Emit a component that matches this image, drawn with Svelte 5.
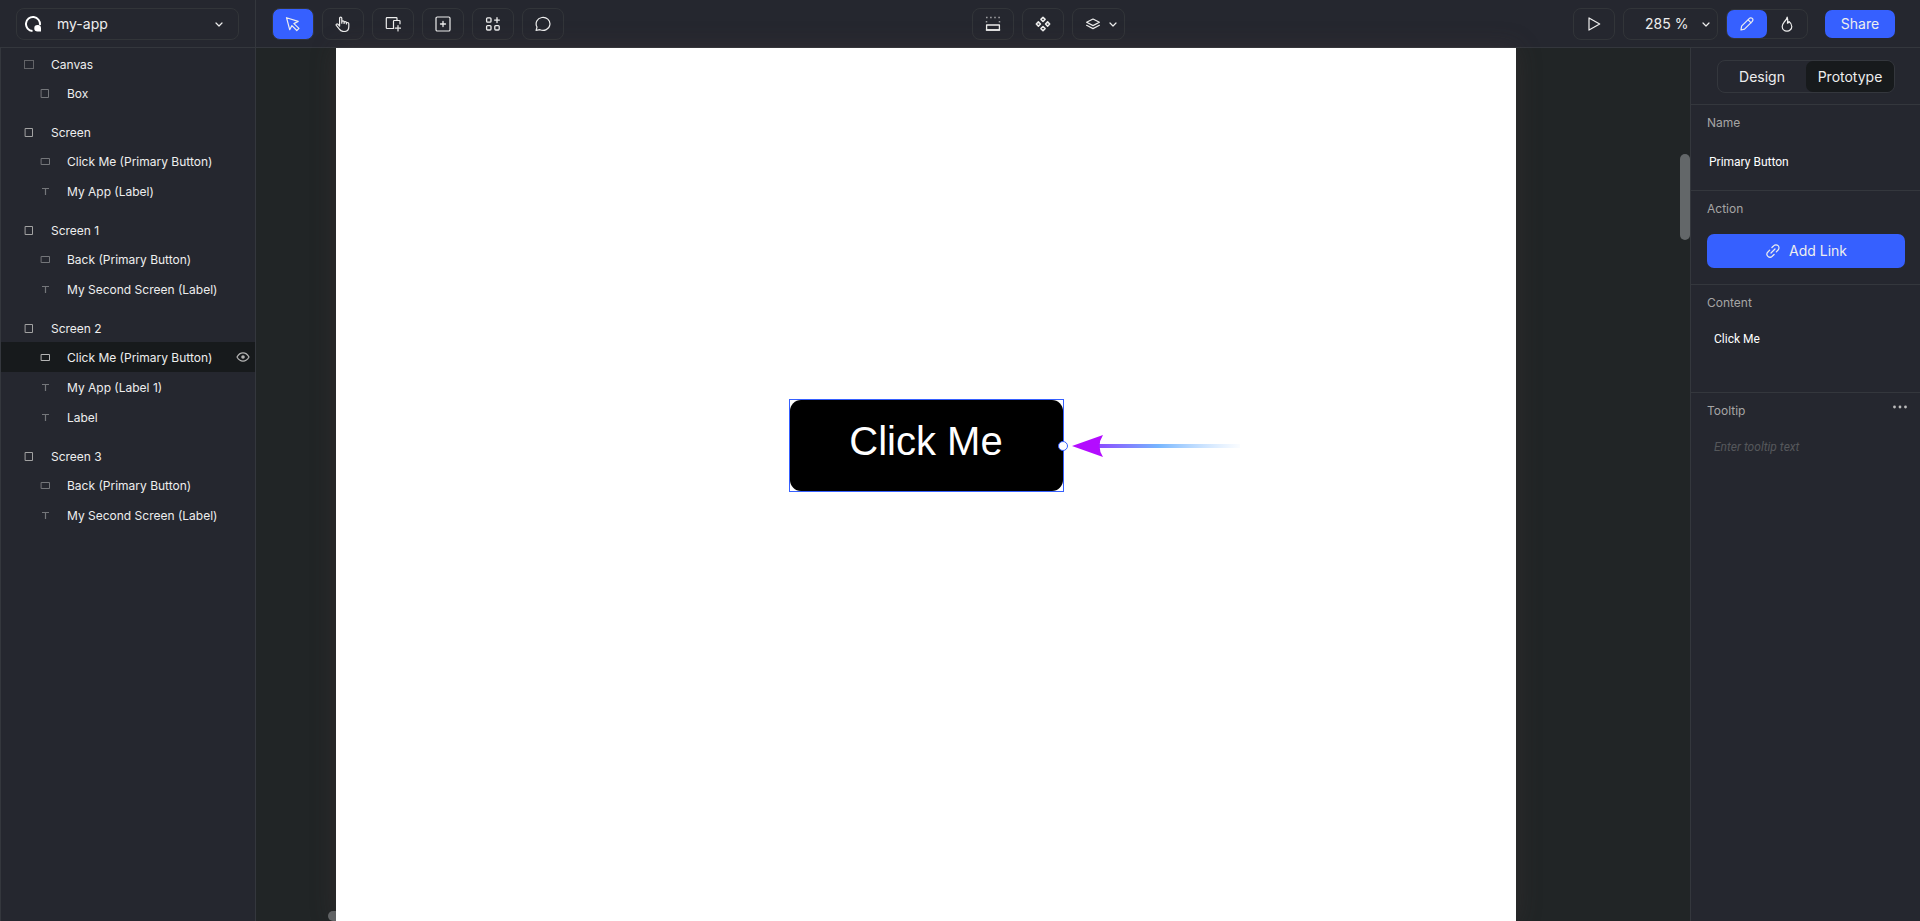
<script>
  const tree = [
    { name: 'Canvas', icon: 'canvas', items: [{ name: 'Box', icon: 'box' }] },
    {
      name: 'Screen',
      icon: 'screen',
      items: [
        { name: 'Click Me (Primary Button)', icon: 'button' },
        { name: 'My App (Label)', icon: 'label' }
      ]
    },
    {
      name: 'Screen 1',
      icon: 'screen',
      items: [
        { name: 'Back (Primary Button)', icon: 'button' },
        { name: 'My Second Screen (Label)', icon: 'label' }
      ]
    },
    {
      name: 'Screen 2',
      icon: 'screen',
      items: [
        { name: 'Click Me (Primary Button)', icon: 'button', selected: true },
        { name: 'My App (Label 1)', icon: 'label' },
        { name: 'Label', icon: 'label' }
      ]
    },
    {
      name: 'Screen 3',
      icon: 'screen',
      items: [
        { name: 'Back (Primary Button)', icon: 'button' },
        { name: 'My Second Screen (Label)', icon: 'label' }
      ]
    }
  ];

  const tools = ['cursor', 'hand', 'screenAdd', 'boxAdd', 'components', 'comment'];
  let activeTool = $state('cursor');
  let mode = $state('edit');
  let tab = $state('Prototype');
  let zoom = $state('285 %');
  let name = $state('Primary Button');
  let content = $state('Click Me');
  let tooltip = $state('');
</script>

{#snippet icon(kind)}
  <svg class="icon" viewBox="0 0 16 16" width="16" height="16" fill="none" stroke="currentColor" stroke-linecap="round" stroke-linejoin="round" aria-hidden="true">
    {#if kind === 'cursor'}
      <path d="M1.5 1.7 13.2 5.4 8.9 7.6 14 12.4 11.8 14.5 6.9 9.6 4.7 13.7Z" stroke-width="1.2" />
    {:else if kind === 'hand'}
      <path d="M4.6 10V2.2a1.1 1.1 0 0 1 2.2 0V7.2M6.8 7.2V6a1.1 1.1 0 0 1 2.3 0v1.5M9.1 7.5V6.8a1.1 1.1 0 0 1 2.3 0v1M11.4 8v-.3a1.2 1.2 0 0 1 2.4 0v3c0 3-1.9 4.8-4.9 4.8-2.4 0-3.5-.8-4.6-2.4L1.3 9.4c-.6-1 .6-2 1.6-1.2L4.6 10" stroke-width="1.2" />
    {:else if kind === 'screenAdd'}
      <path d="M8.5 12.5H2a.7.7 0 0 1-.7-.7V2.4a.7.7 0 0 1 .7-.7h9.3a.7.7 0 0 1 .7.7v2" stroke-width="1.2" />
      <path d="M8.5 12.5V5.2a.7.7 0 0 1 .7-.7h5.1a.7.7 0 0 1 .7.7v2.6M13 9.5v5.4M10.3 12.2h5.4" stroke-width="1.2" />
    {:else if kind === 'boxAdd'}
      <rect x="1" y="1" width="14" height="14" rx="1.3" stroke-width="1.2" />
      <path d="M8 5.5v5M5.5 8h5" stroke-width="1.3" />
    {:else if kind === 'components'}
      <rect x="1.6" y="1.8" width="4.4" height="4.4" rx="1" stroke-width="1.3" />
      <rect x="1.6" y="9.6" width="4.4" height="4.4" rx="1" stroke-width="1.3" />
      <rect x="9.8" y="9.6" width="4.4" height="4.4" rx="1" stroke-width="1.3" />
      <path d="M12 1.7v4.8M9.6 4.1h4.8" stroke-width="1.3" />
    {:else if kind === 'comment'}
      <path d="M1.1 14.4 2 11A6.9 6.5 0 1 1 5 13.7Z" stroke-width="1.2" />
    {:else if kind === 'layout'}
      <path d="M1 1.5h14" stroke-width="1.6" stroke-dasharray="1.6 2.5" stroke-linecap="butt" opacity=".6" />
      <path d="M1.5 5v1.6M14.5 5v1.6" stroke-width="1.5" stroke-linecap="butt" opacity=".6" />
      <rect x="1.6" y="9" width="12.8" height="5" stroke-width="1.3" />
      <path d="M1.5 14h13" stroke-width="1.6" />
    {:else if kind === 'diamonds'}
      {#each [[8, 3.4], [3.4, 8], [12.6, 8], [8, 12.6]] as [x, y]}
        <path d="M{x} {y - 2.1}l2.1 2.1-2.1 2.1-2.1-2.1Z" stroke-width="1.5" />
      {/each}
    {:else if kind === 'layers'}
      <path d="M8 3 14.4 6.3 8 9.6 1.6 6.3Z" stroke-width="1.2" />
      <path d="M1.6 9.3 8 12.6l6.4-3.3" stroke-width="1.2" />
    {:else if kind === 'chevron'}
      <path d="M5 7l3 3 3-3" stroke-width="1.2" />
    {:else if kind === 'play'}
      <path d="M3 1.9 13.7 8 3 14.1Z" stroke-width="1.2" />
    {:else if kind === 'pencil'}
      <path d="M2 14l.6-3.8 7.8-7.8a2 2 0 0 1 2.9 0 2 2 0 0 1 0 2.9l-7.8 7.8ZM9.2 3.9l2.9 2.9" stroke-width="1.2" />
    {:else if kind === 'flame'}
      <path d="M8.2 1.2c.8 2.2 1 3.7.2 6 .8-.2 1.3-.9 1.6-1.7 1.8 1.3 2.8 3 2.8 5a4.8 4.6 0 0 1-9.6 0c0-1.7.7-2.9 1.8-4.2C6.5 4.9 7.9 3.5 8.2 1.2Z" stroke-width="1.2" />
    {:else if kind === 'link'}
      <path d="M6.9 4.5 8.8 2.7a2.9 2.9 0 0 1 4.3 4.3l-1.8 1.9M9.1 11.5l-1.9 1.8a2.9 2.9 0 0 1-4.3-4.3l1.8-1.9M6 10l4-4" stroke-width="1.2" />
    {:else if kind === 'dots'}
      <g fill="currentColor" stroke="none">
        <circle cx="2.5" cy="8" r="1.4" /><circle cx="8" cy="8" r="1.4" /><circle cx="13.5" cy="8" r="1.4" />
      </g>
    {:else if kind === 'eye'}
      <path d="M2 7c1.5-2.7 3.5-4.1 6-4.1s4.5 1.4 6 4.1c-1.5 2.7-3.5 4.1-6 4.1S3.5 9.7 2 7Z" stroke-width="1.2" />
      <circle cx="8" cy="7" r="1.8" fill="currentColor" stroke="none" />
    {:else if kind === 'canvas'}
      <rect x="3.5" y="3.5" width="9" height="8" stroke-dasharray="1 1" stroke-linecap="butt" />
    {:else if kind === 'box' || kind === 'screen'}
      <rect x="4.5" y="3.5" width="7" height="8" />
    {:else if kind === 'button'}
      <rect x="4.5" y="4.5" width="8" height="6" />
    {:else if kind === 'label'}
      <path d="M5 4.5h7M8.5 4v7" stroke-width="1.2" stroke-linecap="butt" />
    {/if}
  </svg>
{/snippet}

<div class="app">
  <header>
    <div class="brand">
      <button class="pill project">
        <svg class="icon" viewBox="0 0 16 16" width="16" height="16" aria-hidden="true">
          <path d="M7.5 15A7 7 0 1 1 14.9 9" fill="none" stroke="#fff" stroke-width="2" />
          <path d="M12.5 9A3.2 3.2 0 1 0 12.5 15.5H16V12A3.2 3.2 0 0 0 12.5 9Z" fill="#fff" />
        </svg>
        <span>my-app</span>
        {@render icon('chevron')}
      </button>
    </div>
    <nav class="group">
      {#each tools as tool}
        <button class="pill tool" class:active={activeTool === tool} aria-label={tool} onclick={() => (activeTool = tool)}>
          {@render icon(tool)}
        </button>
      {/each}
    </nav>
    <div class="group middle">
      <button class="pill tool" aria-label="Layout">{@render icon('layout')}</button>
      <button class="pill tool" aria-label="States">{@render icon('diamonds')}</button>
      <button class="pill layers" aria-label="Layers">{@render icon('layers')}{@render icon('chevron')}</button>
    </div>
    <div class="group">
      <button class="pill tool" aria-label="Play">{@render icon('play')}</button>
      <div class="pill zoom">
        <select aria-label="Zoom" bind:value={zoom}>
          <option>285 %</option>
        </select>
        {@render icon('chevron')}
      </div>
      <div class="modes">
        <button class:active={mode === 'edit'} aria-label="Edit" onclick={() => (mode = 'edit')}>{@render icon('pencil')}</button>
        <button class:active={mode === 'heat'} aria-label="Heat" onclick={() => (mode = 'heat')}>{@render icon('flame')}</button>
      </div>
    </div>
    <button class="share">Share</button>
  </header>

  <div class="body">
    <aside class="tree">
      {#each tree as group}
        <section>
          <button class="row head">{@render icon(group.icon)}<span>{group.name}</span></button>
          {#each group.items as item}
            <button class="row child" class:selected={item.selected}>
              {@render icon(item.icon)}<span>{item.name}</span>
              {#if item.selected}{@render icon('eye')}{/if}
            </button>
          {/each}
        </section>
      {/each}
    </aside>

    <main>
      <div class="hscroll"></div>
      <div class="artboard">
        <div class="selection">
          <button class="primary">Click Me</button>
          <span class="handle"></span>
          <svg class="arrow" viewBox="0 0 168 24" width="168" height="24" aria-hidden="true">
            <defs>
              <linearGradient id="tail" x1="27" x2="168" y1="0" y2="0" gradientUnits="userSpaceOnUse">
                <stop offset="0" stop-color="#8b4dff" />
                <stop offset=".42" stop-color="#76b6ff" />
                <stop offset="1" stop-color="#a8d0ff" stop-opacity="0.05" />
              </linearGradient>
            </defs>
            <rect x="26" y="10" width="142" height="4" fill="url(#tail)" />
            <path d="M0 12 31 1Q24 12 31 23Z" fill="#b30cff" />
          </svg>
        </div>
      </div>
      <div class="vscroll"></div>
    </main>

    <aside class="props">
      <div class="tabs">
        {#each ['Design', 'Prototype'] as t}
          <button class:active={tab === t} onclick={() => (tab = t)}>{t}</button>
        {/each}
      </div>
      <section class="name">
        <label for="name">Name</label>
        <input id="name" bind:value={name} />
      </section>
      <section class="action">
        <h2>Action</h2>
        <button class="link">{@render icon('link')}<span>Add Link</span></button>
      </section>
      <section class="content">
        <label for="content">Content</label>
        <textarea id="content" bind:value={content}></textarea>
      </section>
      <section class="tooltip">
        <div class="title">
          <label for="tooltip">Tooltip</label>
          <button class="more" aria-label="More">{@render icon('dots')}</button>
        </div>
        <textarea id="tooltip" placeholder="Enter tooltip text" bind:value={tooltip}></textarea>
      </section>
    </aside>
  </div>
</div>

<style>
  :global(body) {
    background: #25272f;
  }
  .app {
    --line: #34373d;
    --blue: #3660ff;
    display: flex;
    flex-direction: column;
    height: 100vh;
    overflow: hidden;
    box-sizing: border-box;
    font: 400 14px/20px Inter, sans-serif;
    color: #eee;
    background: #25272f;
  }
  .app :global(*) {
    box-sizing: border-box;
  }
  button, select, input, textarea {
    margin: 0;
    padding: 0;
    border: 0;
    outline: 0;
    background: none;
    color: inherit;
    font: inherit;
  }
  button {
    cursor: pointer;
  }
  .icon {
    flex: none;
    display: block;
  }
  header {
    display: flex;
    align-items: center;
    height: 48px;
    flex: none;
    border-bottom: 1px solid var(--line);
    padding-right: 25px;
  }
  .brand {
    width: 256px;
    height: 48px;
    padding: 8px 16px;
    border-right: 1px solid var(--line);
    margin-right: 16px;
  }
  .pill {
    display: flex;
    align-items: center;
    height: 32px;
    border: 1px solid #323539;
    border-radius: 8px;
  }
  .project {
    width: 100%;
    padding: 0 11px 0 8px;
    gap: 16px;
    text-align: left;
  }
  .project span {
    flex: 1;
  }
  .group {
    display: flex;
    align-items: center;
    gap: 8px;
  }
  .middle {
    flex: 1;
    justify-content: center;
    padding-right: 40px;
  }
  .tool {
    width: 42px;
    justify-content: center;
  }
  .tool.active {
    background: var(--blue);
  }
  .layers {
    padding: 0 3px 0 12px;
    gap: 4px;
  }
  .zoom {
    width: 95px;
    padding-right: 3px;
  }
  .zoom select {
    flex: 1;
    appearance: none;
    padding-left: 21px;
  }
  .modes {
    display: flex;
    border: 1px solid #323539;
    border-radius: 8px;
    margin-right: 17px;
  }
  .modes button {
    display: grid;
    place-items: center;
    width: 40px;
    height: 28px;
    border-radius: 7px;
  }
  .modes .active {
    background: var(--blue);
  }
  .share {
    width: 70px;
    height: 28px;
    border-radius: 7px;
    background: var(--blue);
  }
  .body {
    flex: 1;
    display: flex;
    min-height: 0;
  }
  .tree {
    width: 256px;
    flex: none;
    border: solid var(--line);
    border-width: 0 1px;
    padding-top: 2px;
    font-size: 12px;
  }
  .tree section {
    margin-bottom: 10px;
  }
  .row {
    display: flex;
    align-items: center;
    width: 100%;
    padding-top: 2px;
    gap: 14px;
    text-align: left;
  }
  .row span {
    flex: 1;
  }
  .head {
    height: 28px;
    padding-left: 20px;
  }
  .head .icon {
    color: #a2a2a2;
  }
  .child {
    height: 30px;
    padding-left: 36px;
    padding-right: 4px;
  }
  .child .icon {
    color: #74767a;
  }
  .selected {
    background: #171a1c;
  }
  .child.selected .icon {
    color: #b4b4b4;
  }
  main {
    flex: 1;
    position: relative;
    display: flex;
    padding: 0 174px 0 80px;
    background: #212526;
  }
  .artboard {
    flex: 1;
    position: relative;
    display: flex;
    justify-content: center;
    align-items: flex-start;
    padding-top: 351px;
    background: #fff;
    box-shadow: 0 0 24px rgba(80, 60, 60, 0.3);
  }
  .selection {
    position: relative;
    border: 1px solid #3660ff;
  }
  .primary {
    display: block;
    width: 273px;
    height: 91px;
    padding-bottom: 10px;
    border-radius: 11px;
    background: #000;
    color: #fff;
    font: 40px/46px "Liberation Sans", Arial, sans-serif;
  }
  .handle {
    position: absolute;
    right: -5px;
    top: 41px;
    width: 10px;
    height: 10px;
    border: 1px solid #3660ff;
    border-radius: 50%;
    background: #fff;
  }
  .arrow {
    position: absolute;
    left: 282px;
    top: 34px;
  }
  .vscroll,
  .hscroll {
    position: absolute;
    border-radius: 5px;
    background: #636769;
  }
  .vscroll {
    right: 0;
    top: 106px;
    width: 10px;
    height: 86px;
  }
  .hscroll {
    left: 72px;
    bottom: 0;
    width: 86px;
    height: 10px;
  }
  .props {
    width: 230px;
    flex: none;
    border-left: 1px solid var(--line);
    font-size: 12px;
  }
  .tabs {
    display: flex;
    margin: 12px 25px 11px 26px;
    border: 1px solid var(--line);
    border-radius: 8px;
    font-size: 14px;
  }
  .tabs button {
    flex: 1;
    height: 31px;
    border-radius: 7px;
  }
  .tabs .active {
    background: #171a1c;
  }
  .props section {
    border-top: 1px solid var(--line);
    padding: 8px 15px 0 16px;
  }
  label, h2 {
    display: block;
    margin: 0;
    font-size: 12px;
    font-weight: 400;
    color: #a5a5a5;
  }
  .name {
    height: 86px;
  }
  .name input {
    width: 100%;
    margin-top: 19px;
    padding: 0 2px;
    height: 20px;
  }
  input, textarea {
    font: 12px/20px Roboto, sans-serif;
    color: #fff;
  }
  .action {
    height: 94px;
  }
  .link {
    display: flex;
    align-items: center;
    justify-content: center;
    gap: 8px;
    width: 100%;
    height: 34px;
    margin-top: 15px;
    border-radius: 7px;
    background: var(--blue);
    font-size: 14px;
  }
  .content {
    height: 108px;
  }
  textarea {
    display: block;
    width: 100%;
    height: 36px;
    margin-top: 16px;
    padding: 0 7px;
    resize: none;
  }
  .title {
    display: flex;
    justify-content: space-between;
  }
  .more {
    height: 16px;
    margin-top: -2px;
    margin-right: -3px;
    color: #bbb;
  }
  .tooltip textarea::placeholder {
    color: #55575b;
    font-style: italic;
  }
</style>
